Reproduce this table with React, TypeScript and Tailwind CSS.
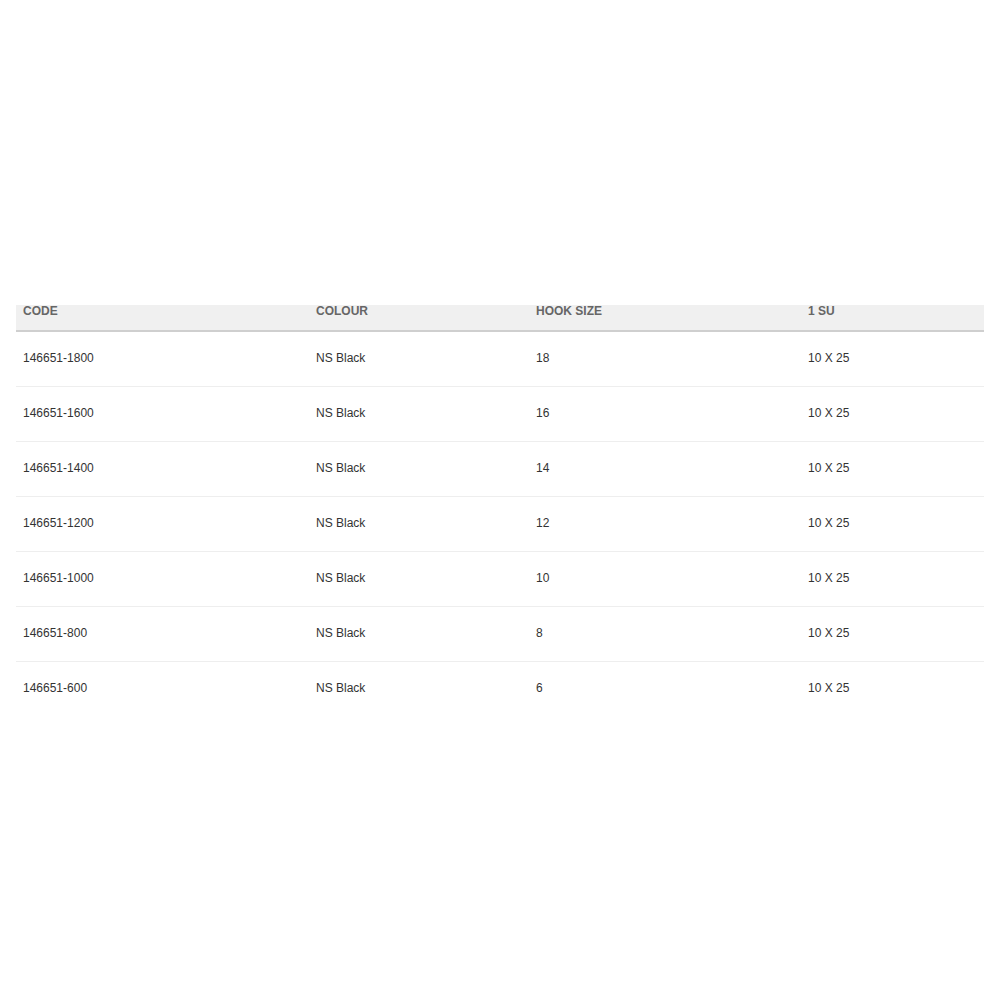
import React from 'react';

const rows = [
  { code: '146651-1800', colour: 'NS Black', hook: '18', su: '10 X 25' },
  { code: '146651-1600', colour: 'NS Black', hook: '16', su: '10 X 25' },
  { code: '146651-1400', colour: 'NS Black', hook: '14', su: '10 X 25' },
  { code: '146651-1200', colour: 'NS Black', hook: '12', su: '10 X 25' },
  { code: '146651-1000', colour: 'NS Black', hook: '10', su: '10 X 25' },
  { code: '146651-800', colour: 'NS Black', hook: '8', su: '10 X 25' },
  { code: '146651-600', colour: 'NS Black', hook: '6', su: '10 X 25' },
];

export default function App() {
  return (
    <div className="w-[1000px] h-[1000px] bg-white pt-[305px] px-4 font-['Liberation_Sans',Arial,sans-serif]">
      <table className="w-[968px] table-fixed border-collapse">
        <colgroup>
          <col className="w-[293px]" />
          <col className="w-[220px]" />
          <col className="w-[272px]" />
          <col className="w-[183px]" />
        </colgroup>
        <thead>
          <tr className="h-[26px] bg-[#f0f0f0] border-b-2 border-[#cfcfcf]">
            {['CODE', 'COLOUR', 'HOOK SIZE', '1 SU'].map(h => (
              <th key={h} className="px-[7px] pt-0 pb-[12px] text-left align-top text-[12px] leading-[12px] font-bold text-[#666]">
                {h}
              </th>
            ))}
          </tr>
        </thead>
        <tbody>
          {rows.map((r, i) => (
            <tr
              key={r.code}
              className={`h-[55px] ${i < rows.length - 1 ? 'border-b border-[#eeeeee]' : ''}`}
            >
              <td className="px-[7px] pb-[1px] text-[12px] text-[#333] align-middle">{r.code}</td>
              <td className="px-[7px] pb-[1px] text-[12px] text-[#333] align-middle">{r.colour}</td>
              <td className="px-[7px] pb-[1px] text-[12px] text-[#333] align-middle">{r.hook}</td>
              <td className="px-[7px] pb-[1px] text-[12px] text-[#333] align-middle">{r.su}</td>
            </tr>
          ))}
        </tbody>
      </table>
    </div>
  );
}
